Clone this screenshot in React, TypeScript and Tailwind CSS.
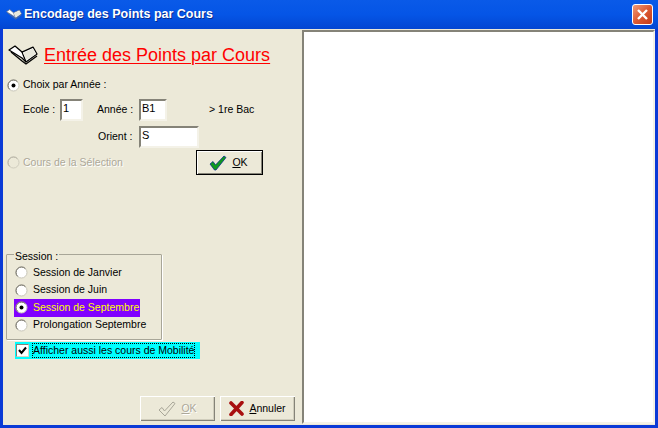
const FONT = "font-['Liberation_Sans',Arial,sans-serif]"

function Radio({ checked, disabled }: { checked?: boolean; disabled?: boolean }) {
  return (
    <svg width="13" height="13" viewBox="0 0 13 13" className="shrink-0">
      <circle cx="6.5" cy="6.5" r="5.5" fill={disabled ? '#ece9d8' : '#ffffff'} stroke={disabled ? '#d0cdbe' : '#c8c6b8'} strokeWidth="1" />
      <path d="M2.6 10.4a5.5 5.5 0 0 1 0-7.8 5.5 5.5 0 0 1 7.8 0" fill="none" stroke={disabled ? '#b5b2a4' : '#6e6c64'} strokeWidth="1" />
      {checked && <circle cx="6.5" cy="6.5" r="2" fill="#000000" />}
    </svg>
  )
}

function Field({ value, w }: { value: string; w: string }) {
  return (
    <div className={`${w} h-[22px] bg-white border-2 border-t-[#858378] border-l-[#858378] border-r-[#f4f2e8] border-b-[#f4f2e8] pl-[1px] leading-[15px] text-[11px] text-black`}>
      {value}
    </div>
  )
}

function BookIcon({ size, tone = '#000000' }: { size: number; tone?: string }) {
  return (
    <svg width={size} height={size * 0.67} viewBox="0 0 30 20" className="shrink-0">
      <path d="M1 5 L7 1 L14 7 L25 2 L29 9 L18 17 L14 13 Z" fill="#ffffff" stroke={tone} strokeWidth="1.3" strokeLinejoin="round" />
      <path d="M14 7 L18 17 M3 7 L14 16 L18 19 L29 11" fill="none" stroke={tone} strokeWidth="1.3" />
      <path d="M15 8 L25 3.5 L28 9 L18.5 15 Z" fill="#e8e8dc" />
    </svg>
  )
}

function Check({ muted }: { muted?: boolean }) {
  return (
    <svg width="18" height="16" viewBox="0 0 18 16" className="shrink-0">
      {muted ? (
        <path d="M1 9 L4 6.5 L6.5 10 L15 1 L17 2.5 L7 15 Z" fill="#ece9d8" stroke="#a8a698" strokeWidth="1" strokeLinejoin="round" />
      ) : (
        <path d="M1 9 L4 6.5 L6.5 10 L15 1 L17 2.5 L7 15 L5.5 15 Z" fill="#0f9a1e" stroke="#0b2f8c" strokeWidth="0.8" strokeLinejoin="round" />
      )}
    </svg>
  )
}

function Cross() {
  return (
    <svg width="15" height="15" viewBox="0 0 15 15" className="shrink-0">
      <path d="M2 2 L13 13 M13 1.5 L2 13.5" stroke="#a80f0f" strokeWidth="3.6" strokeLinecap="round" />
    </svg>
  )
}

function SessionRow({ label, checked, active }: { label: string; checked?: boolean; active?: boolean }) {
  return (
    <div className={`flex items-center h-[17.5px] w-fit pl-[1px] pr-[1px] gap-[5px] whitespace-nowrap ${active ? 'bg-[#8000ff] text-[#ffff00]' : 'text-black'}`}>
      <Radio checked={checked} />
      <span>{label}</span>
    </div>
  )
}

export default function App() {
  return (
    <div className={`${FONT} w-[658px] h-[428px] flex flex-col overflow-hidden bg-[#0a3ad6] text-[10.5px] text-black`}>
      {/* title bar */}
      <div className="h-[29px] shrink-0 flex items-center pl-[6px] pr-[5px] bg-gradient-to-b from-[#0a5ae8] via-[#0555e6] to-[#0346d2]">
        <BookIcon size={16} tone="#6b7488" />
        <span className="ml-[2px] text-[12.5px] font-bold text-white [text-shadow:1px_1px_0_#0a2c90]">Encodage des Points par Cours</span>
        <div className="ml-auto w-[21px] h-[21px] rounded-[3px] border border-white bg-gradient-to-br from-[#ef9a78] via-[#dd5a32] to-[#c23a1a] flex items-center justify-center">
          <svg width="13" height="13" viewBox="0 0 13 13">
            <path d="M2 2 L11 11 M11 2 L2 11" stroke="#ffffff" strokeWidth="2.4" />
          </svg>
        </div>
      </div>

      {/* client area */}
      <div className="flex-1 min-h-0 mx-[3px] mb-[3px] flex bg-[#ece9d8]">
        <div className="w-[299px] shrink-0 flex flex-col pl-[4px] pr-[7px]">
          <div className="flex items-center h-[20px] mt-[16px] ml-[1px]">
            <BookIcon size={30} />
            <span className="ml-[6px] text-[18px] leading-[20px] text-[#ff0000] underline decoration-1 underline-offset-2 whitespace-nowrap">Entrée des Points par Cours</span>
          </div>

          <div className="flex items-center h-[16px] mt-[12px] gap-[3px]">
            <Radio checked />
            <span>Choix par Année :</span>
          </div>

          <div className="flex items-center h-[22px] mt-[6px] ml-[16px]">
            <span className="w-[37px]">Ecole :</span>
            <Field value="1" w="w-[23px]" />
            <span className="w-[42px] ml-[14px]">Année :</span>
            <Field value="B1" w="w-[28px]" />
            <span className="ml-[42px]">&gt; 1re Bac</span>
          </div>

          <div className="flex items-center h-[22px] mt-[5px] ml-[91px]">
            <span className="w-[41px]">Orient :</span>
            <Field value="S" w="w-[60px]" />
          </div>

          <div className="flex items-center h-[25px] mt-[2px]">
            <Radio disabled />
            <span className="ml-[3px] text-[#aca899] [text-shadow:1px_1px_0_#ffffff]">Cours de la Sélection</span>
            <button className="ml-auto mr-[32px] w-[67px] h-[25px] flex items-center justify-center gap-[5px] bg-[#ece9d8] border border-black shadow-[inset_1px_1px_0_#ffffff,inset_-1px_-1px_0_#858378]">
              <Check />
              <span className="pr-[2px]"><span className="underline">O</span>K</span>
            </button>
          </div>

          <fieldset className="mt-[75px] -ml-[1px] w-[156px] h-[90px] shrink-0 border border-[#a8a698] shadow-[1px_1px_0_#ffffff] rounded-[1px] px-[7px]">
            <legend className="px-[1px] h-[9px] leading-[13px]">Session :</legend>
            <div className="flex flex-col mt-[5px]">
              <SessionRow label="Session de Janvier" />
              <SessionRow label="Session de Juin" />
              <SessionRow label="Session de Septembre" checked active />
              <SessionRow label="Prolongation Septembre" />
            </div>
          </fieldset>

          <div className="flex items-center mt-[2px] ml-[8px] w-[185px] h-[17px] bg-[#00ffff] whitespace-nowrap">
            <div className="w-[13px] h-[13px] ml-[1px] shrink-0 bg-white border border-t-[#858378] border-l-[#858378] border-r-[#d8d5c6] border-b-[#d8d5c6] flex items-center justify-center">
              <svg width="9" height="9" viewBox="0 0 9 9">
                <path d="M1 4 L3.5 7 L8 1.5" fill="none" stroke="#000000" strokeWidth="2" />
              </svg>
            </div>
            <span className="ml-[3px] border border-dotted border-black leading-[13px]">Afficher aussi les cours de Mobilité</span>
          </div>

          <div className="mt-auto mb-[4px] flex justify-end gap-[5px]">
            <button className="w-[75px] h-[25px] flex items-center justify-center gap-[5px] bg-[#ece9d8] text-[#aca899] [text-shadow:1px_1px_0_#ffffff] shadow-[inset_1px_1px_0_#ffffff,inset_-1px_-1px_0_#858378,inset_-2px_-2px_0_#d0cdbc]">
              <Check muted />
              <span><span className="underline">O</span>K</span>
            </button>
            <button className="w-[75px] h-[25px] flex items-center justify-center gap-[5px] bg-[#ece9d8] shadow-[inset_1px_1px_0_#ffffff,inset_-1px_-1px_0_#858378,inset_-2px_-2px_0_#d0cdbc]">
              <Cross />
              <span><span className="underline">A</span>nnuler</span>
            </button>
          </div>
        </div>

        {/* white panel */}
        <div className="flex-1 mt-[1px] mb-[1px] bg-white border-2 border-t-[#858378] border-l-[#858378] border-r-[#f4f2e8] border-b-[#f4f2e8]" />
      </div>
    </div>
  )
}
